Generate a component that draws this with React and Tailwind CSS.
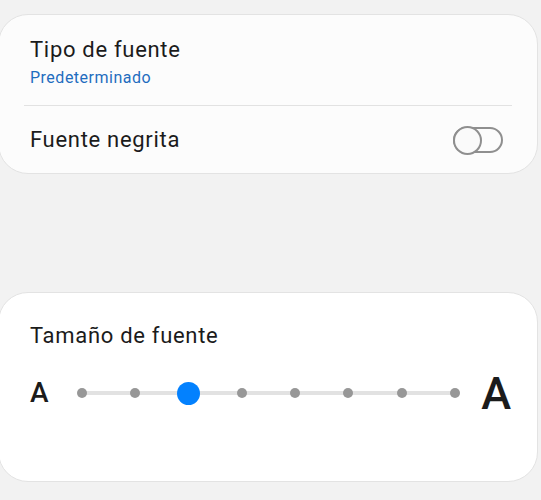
export default function App() {
  const steps = [0, 1, 2, 3, 4, 5, 6, 7]
  const current = 2

  return (
    <div
      className="min-h-[500px] w-[541px] overflow-hidden bg-[#f2f2f2] pt-[14px] text-[#1b1b1b]"
      style={{ fontFamily: 'Roboto, "Noto Sans", sans-serif' }}
    >
      <div className="ml-[-2px] w-[540px] rounded-[30px] border border-[#e3e3e3] bg-[#fcfcfc]">
        <div className="pl-[31px] pt-[22px]">
          <div className="text-[22px] leading-[26px] tracking-[0.7px]">Tipo de fuente</div>
          <div className="mt-[5px] text-[16px] leading-[20px] tracking-[0.5px] text-[#1f6dbf]">Predeterminado</div>
        </div>
        <div className="mx-[25px] mt-[17px] h-px bg-[#e2e2e2]" />
        <div className="flex h-[67px] items-center justify-between pl-[31px] pr-[34px]">
          <div className="text-[22px] leading-[26px] tracking-[0.7px]">Fuente negrita</div>
          <div className="relative h-[26px] w-[50px] rounded-full border-2 border-[#8f8f8f]">
            <div className="absolute left-[-2px] top-[-3px] h-[29px] w-[29px] rounded-full border-2 border-[#8f8f8f] bg-[#fafafa]" />
          </div>
        </div>
      </div>

      <div className="ml-[-2px] mt-[118px] h-[190px] w-[540px] rounded-[30px] border border-[#e3e3e3] bg-white">
        <div className="pl-[31px] pt-[30px] text-[22px] leading-[26px] tracking-[0.7px]">Tamaño de fuente</div>
        <div className="mt-[22px] flex h-[44px] items-center pl-[31px] pr-[26px]">
          <div className="w-[20px] text-[28px] font-medium leading-none">A</div>
          <div className="relative ml-[27px] flex w-[383px] items-center justify-between">
            <div className="absolute left-[5px] right-[5px] top-1/2 h-[4px] -translate-y-1/2 rounded-full bg-[#e2e2e2]" />
            {steps.map((s) => (
              <div key={s} className="relative flex h-[24px] w-[10px] items-center justify-center">
                {s === current ? (
                  <div className="h-[23px] w-[23px] shrink-0 rounded-full bg-[#0381fe]" />
                ) : (
                  <div className="h-[10px] w-[10px] shrink-0 rounded-full bg-[#979797]" />
                )}
              </div>
            ))}
          </div>
          <div className="ml-auto text-[45px] font-medium leading-none">A</div>
        </div>
      </div>
    </div>
  )
}
